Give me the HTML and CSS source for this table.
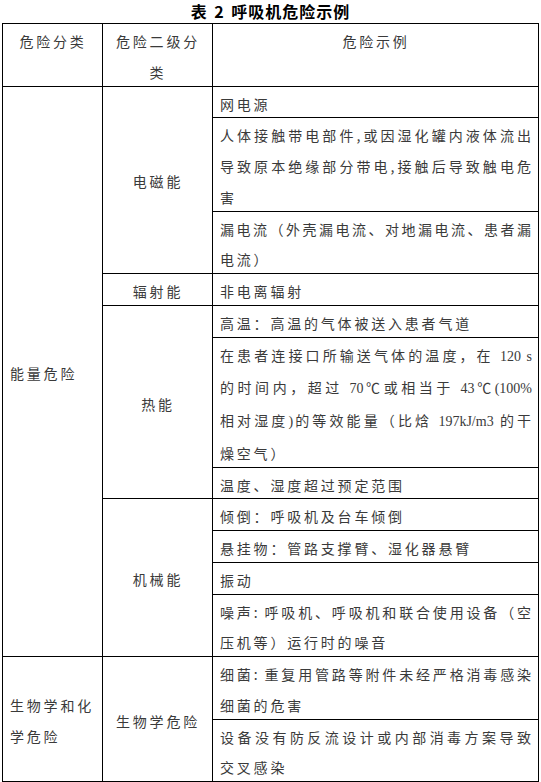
FILE: index.html
```html
<!DOCTYPE html>
<html lang="zh-CN">
<head>
<meta charset="utf-8">
<title>表 2 呼吸机危险示例</title>
<link rel="stylesheet" href="styles.css">
</head>
<body>
<h1 class="title">表 2 呼吸机危险示例</h1>
<table class="hazards">
  <colgroup>
    <col class="c1">
    <col class="c2">
    <col class="c3">
  </colgroup>
  <thead>
    <tr>
      <th><span class="tx">危险分类</span></th>
      <th><span class="tx">危险二级分<br>类</span></th>
      <th><span class="tx">危险示例</span></th>
    </tr>
  </thead>
  <tbody>
    <tr>
      <td class="cat" rowspan="11"><span class="tx">能量危险</span></td>
      <td class="sub" rowspan="3"><span class="tx">电磁能</span></td>
      <td class="ex"><span class="tx">网电源</span></td>
    </tr>
    <tr>
      <td class="ex"><span class="tx">
        <span class="ln j">人体接触带电部件,或因湿化罐内液体流出</span>
        <span class="ln j">导致原本绝缘部分带电,接触后导致触电危</span>
        <span class="ln">害</span>
      </span></td>
    </tr>
    <tr>
      <td class="ex"><span class="tx">
        <span class="ln j">漏电流（外壳漏电流、对地漏电流、患者漏</span>
        <span class="ln">电流）</span>
      </span></td>
    </tr>
    <tr>
      <td class="sub"><span class="tx">辐射能</span></td>
      <td class="ex"><span class="tx">非电离辐射</span></td>
    </tr>
    <tr>
      <td class="sub" rowspan="3"><span class="tx">热能</span></td>
      <td class="ex"><span class="tx">高温：高温的气体被送入患者气道</span></td>
    </tr>
    <tr>
      <td class="ex"><span class="tx">
        <span class="ln j">在患者连接口所输送气体的温度，在 <span class="tnr">120 s</span></span>
        <span class="ln j">的时间内，超过 <span class="tnr">70</span>℃或相当于 <span class="tnr">43</span>℃<span class="tnr">(100%</span></span>
        <span class="ln j">相对湿度<span class="tnr">)</span>的等效能量（比焓 <span class="tnr">197kJ/m3</span> 的干</span>
        <span class="ln">燥空气）</span>
      </span></td>
    </tr>
    <tr>
      <td class="ex"><span class="tx">温度、湿度超过预定范围</span></td>
    </tr>
    <tr>
      <td class="sub" rowspan="4"><span class="tx">机械能</span></td>
      <td class="ex"><span class="tx">倾倒：呼吸机及台车倾倒</span></td>
    </tr>
    <tr>
      <td class="ex"><span class="tx">悬挂物：管路支撑臂、湿化器悬臂</span></td>
    </tr>
    <tr>
      <td class="ex"><span class="tx">振动</span></td>
    </tr>
    <tr>
      <td class="ex"><span class="tx">
        <span class="ln j">噪声: 呼吸机、呼吸机和联合使用设备（空</span>
        <span class="ln">压机等）运行时的噪音</span>
      </span></td>
    </tr>
    <tr>
      <td class="cat" rowspan="2"><span class="tx">生物学和化<br>学危险</span></td>
      <td class="sub" rowspan="2"><span class="tx">生物学危险</span></td>
      <td class="ex"><span class="tx">
        <span class="ln j">细菌: 重复用管路等附件未经严格消毒感染</span>
        <span class="ln">细菌的危害</span>
      </span></td>
    </tr>
    <tr>
      <td class="ex"><span class="tx">
        <span class="ln j">设备没有防反流设计或内部消毒方案导致</span>
        <span class="ln">交叉感染</span>
      </span></td>
    </tr>
  </tbody>
</table>
</body>
</html>
```

FILE: styles.css
```css
html, body {
  margin: 0;
  padding: 0;
  background: #ffffff;
}

body {
  font-family: "Noto Sans CJK SC", "Noto Sans", sans-serif;
  color: #3a3a3a;
}

.title {
  margin: 0;
  height: 23px;
  line-height: 22px;
  text-align: center;
  font-size: 16px;
  font-weight: bold;
  letter-spacing: 1px;
  word-spacing: 2px;
  color: #000000;
}

.hazards {
  border-collapse: collapse;
  table-layout: fixed;
  width: 536px;
  margin-left: 2px;
  font-size: 14px;
  line-height: 30.75px;
  letter-spacing: 2.8px;
}

.c1 { width: 100px; }
.c2 { width: 110px; }
.c3 { width: 326px; }

.hazards th,
.hazards td {
  border: 1px solid #000000;
  padding: 0 6px 0 7px;
  font-weight: normal;
}

.hazards th {
  vertical-align: top;
  text-align: center;
}

.hazards td {
  vertical-align: middle;
}

.cat {
  text-align: left;
  white-space: nowrap;
}

.sub {
  text-align: center;
}

.ex {
  text-align: left;
}

.tx {
  display: block;
  padding-top: 2px;
  margin-bottom: -2px;
}

.ln {
  display: block;
  white-space: nowrap;
}

.j {
  text-align: justify;
  text-align-last: justify;
  letter-spacing: 1px;
}

.tnr {
  font-family: "Liberation Serif", "Times New Roman", serif;
  letter-spacing: 0;
}
```
